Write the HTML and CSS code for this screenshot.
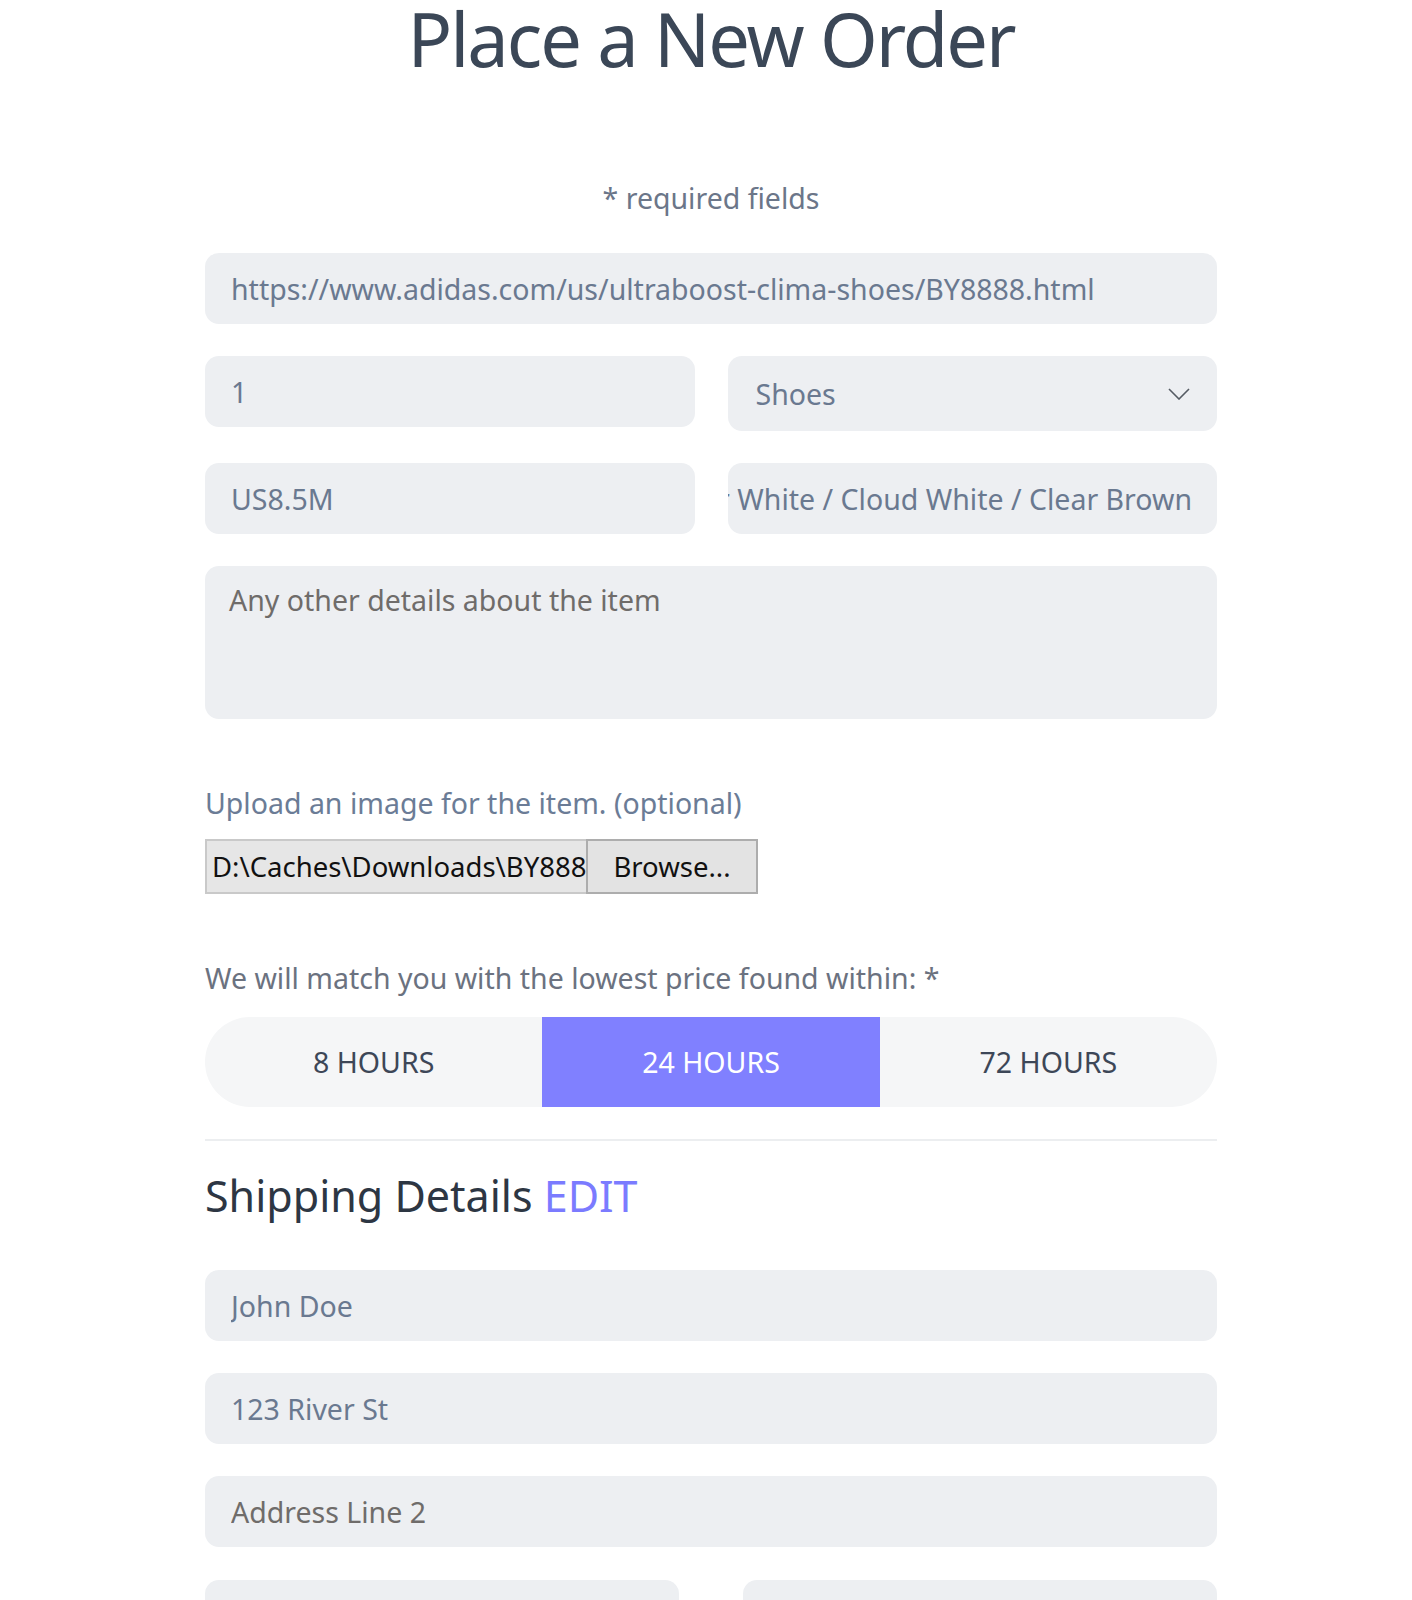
FILE: index.html
```html
<!DOCTYPE html>
<html lang="en">
<head>
<meta charset="utf-8">
<title>Place a New Order</title>
<link rel="stylesheet" href="styles.css">
</head>
<body>
<main class="page">
  <h1 class="title">Place a New Order</h1>
  <p class="required">* required fields</p>

  <form class="order-form">
    <input class="field" type="text" value="https://www.adidas.com/us/ultraboost-clima-shoes/BY8888.html">

    <div class="row">
      <input class="field field-short" type="text" value="1">
      <div class="select-wrap">
        <select class="field field-select">
          <option>Shoes</option>
        </select>
        <svg class="chevron" width="22" height="12" viewBox="0 0 22 12" aria-hidden="true">
          <path d="M1 1 L11 11 L21 1" fill="none" stroke="#555b63" stroke-width="1.6"/>
        </svg>
      </div>
    </div>

    <div class="row">
      <input class="field field-short" type="text" value="US8.5M">
      <div class="field field-short field-scrolled"><span>Footwear White / Cloud White / Clear Brown</span></div>
    </div>

    <textarea class="field field-area" placeholder="Any other details about the item"></textarea>

    <p class="label label-upload">Upload an image for the item. (optional)</p>
    <div class="file-input">
      <span class="file-path">D:\Caches\Downloads\BY8888.jpg</span>
      <span class="file-button">Browse...</span>
    </div>

    <p class="label label-match">We will match you with the lowest price found within: *</p>
    <div class="segmented">
      <span class="segment">8 HOURS</span>
      <span class="segment segment-active">24 HOURS</span>
      <span class="segment">72 HOURS</span>
    </div>

    <hr class="divider">

    <h2 class="section-title">Shipping Details <span class="edit">EDIT</span></h2>

    <input class="field" type="text" value="John Doe">
    <input class="field field-gap" type="text" value="123 River St">
    <input class="field field-gap" type="text" placeholder="Address Line 2">
    <div class="row row-wide">
      <input class="field field-short" type="text" placeholder="City">
      <input class="field field-short" type="text" placeholder="State">
    </div>
  </form>
</main>
</body>
</html>
```

FILE: styles.css
```css
* {
  box-sizing: border-box;
}

html, body {
  margin: 0;
  background: #ffffff;
}

body {
  padding-left: 10px;
  font-family: "Noto Sans", "Open Sans", sans-serif;
}

.page {
  width: 1012px;
  margin: 0 auto;
}

.title {
  margin: 0;
  font-size: 74px;
  line-height: 77px;
  font-weight: 400;
  color: #3b4757;
  text-align: center;
  letter-spacing: -2px;
}

.required {
  margin: 103px 0 0;
  font-size: 28.5px;
  line-height: 36px;
  color: #6b7689;
  text-align: center;
}

.order-form {
  display: flex;
  flex-direction: column;
  margin-top: 37px;
}

.field {
  display: block;
  width: 100%;
  height: 71px;
  margin: 0;
  padding: 0 26px;
  border: none;
  border-radius: 14px;
  background: #edeff2;
  font-family: inherit;
  font-size: 28.5px;
  color: #6a7990;
  outline: none;
}

.field::placeholder {
  color: #6f6c6a;
  opacity: 1;
}

.row {
  display: grid;
  grid-template-columns: 1fr 1fr;
  column-gap: 33px;
  align-items: start;
  margin-top: 32px;
}

.row-wide {
  column-gap: 64px;
  margin-top: 33px;
}

.field-short {
  height: 71px;
}

.select-wrap {
  position: relative;
}

.field-select {
  height: 75px;
  padding: 0 28px;
  appearance: none;
  -webkit-appearance: none;
}

.chevron {
  position: absolute;
  right: 27px;
  top: 32px;
  pointer-events: none;
}

.field-scrolled {
  display: flex;
  align-items: center;
  justify-content: flex-end;
  overflow: hidden;
  white-space: nowrap;
  padding: 0 25px 0 24px;
}

.field-scrolled span {
  flex: none;
}

.field-area {
  height: 153px;
  margin-top: 32px;
  padding: 15px 24px;
  resize: none;
  line-height: 38px;
}

.label {
  margin: 0;
  font-size: 28.5px;
  line-height: 36px;
  color: #6b7c96;
}

.label-upload {
  margin-top: 66px;
}

.label-match {
  margin-top: 66px;
  color: #6b7280;
}

.file-input {
  display: flex;
  width: 553px;
  height: 55px;
  margin-top: 18px;
  border: 2px solid #c9c9c9;
  background: #e6e6e6;
  font-family: "Noto Sans", sans-serif;
  font-size: 27.5px;
  color: #111111;
}

.file-path {
  flex: 1;
  overflow: hidden;
  white-space: nowrap;
  padding: 0 0 0 5px;
  line-height: 51px;
}

.file-button {
  flex: none;
  width: 172px;
  margin: -2px -2px -2px 0;
  border: 2px solid #adadad;
  background: #e3e3e3;
  text-align: center;
  line-height: 51px;
}

.segmented {
  display: grid;
  grid-template-columns: 1fr 1fr 1fr;
  height: 90px;
  margin-top: 21px;
  border-radius: 45px;
  background: #f5f6f7;
  overflow: hidden;
}

.segment {
  display: flex;
  align-items: center;
  justify-content: center;
  font-size: 28.5px;
  color: #3d4757;
}

.segment-active {
  background: #8080ff;
  color: #ffffff;
}

.divider {
  width: 100%;
  height: 2px;
  margin: 32px 0 0;
  border: none;
  background: #eceef0;
}

.section-title {
  margin: 29px 0 0;
  font-size: 43px;
  line-height: 52px;
  font-weight: 400;
  color: #2d3643;
}

.edit {
  color: #7b7bff;
}

.section-title + .field {
  margin-top: 48px;
}

.field-gap {
  margin-top: 32px;
}
```
